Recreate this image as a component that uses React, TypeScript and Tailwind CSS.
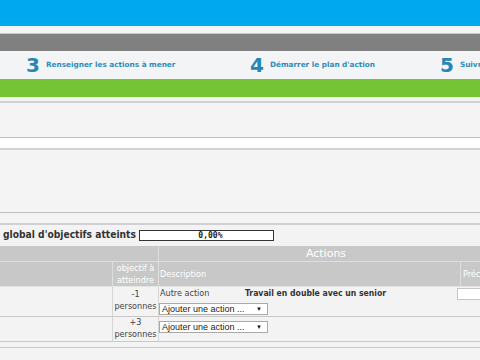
import React from "react";

const cond = "font-['DejaVu_Sans_Condensed','Liberation_Sans',sans-serif]";

function Step({ n, label, w }: { n: string; label: string; w: string }) {
  return (
    <div className={`flex items-center shrink-0 ${w}`}>
      <span className="font-['DejaVu_Sans',sans-serif] font-bold text-[20px] leading-none text-[#2886b6]">{n}</span>
      <span className={`ml-[6px] font-['DejaVu_Sans',sans-serif] font-bold text-[7.3px] leading-none text-[#2e8dbd] whitespace-nowrap`}>{label}</span>
    </div>
  );
}

function FakeSelect() {
  return (
    <div className="w-[109px] h-[12px] bg-white border border-[#a9a9a9] flex items-center justify-between pl-[2px] pr-[5px]">
      <span className="font-['Liberation_Sans',sans-serif] text-[9px] leading-none text-[#222] whitespace-nowrap">Ajouter une action ...</span>
      <span className="text-[6px] leading-none text-[#111]">▼</span>
    </div>
  );
}

export default function App() {
  return (
    <div className="w-[480px] h-[360px] overflow-hidden bg-[#f3f3f3] flex flex-col">
      <div className="h-[26px] shrink-0 bg-[#00a8f0]" />
      <div className="h-[8px] shrink-0 bg-[#f3f4f5] border-b border-[#c9c9c9]" />
      <div className="h-[17px] shrink-0 bg-[#808080]" />
      <div className="h-[28px] shrink-0 bg-[#f3f4f5] flex items-center pl-[26px]">
        <Step n="3" label="Renseigner les actions à mener" w="w-[224px]" />
        <Step n="4" label="Démarrer le plan d'action" w="w-[190px]" />
        <Step n="5" label="Suivre le plan d'action" w="w-[200px]" />
      </div>
      <div className="h-[18px] shrink-0 bg-[#74c436]" />
      <div className="h-[4px] shrink-0 bg-[#f3f4f5]" />
      <div className="h-[2px] shrink-0 bg-[#d2d0d4]" />
      <div className="h-[34px] shrink-0 bg-[#f4f4f4]" />
      <div className="h-[1px] shrink-0 bg-[#bdbdbd]" />
      <div className="h-[10px] shrink-0 bg-white" />
      <div className="h-[2px] shrink-0 bg-[#d3d3d3]" />
      <div className="h-[62px] shrink-0 bg-[#f4f4f4]" />
      <div className="h-[1px] shrink-0 bg-[#bdbdbd]" />
      <div className="h-[10px] shrink-0 bg-[#f4f4f4]" />
      <div className="h-[2px] shrink-0 bg-[#d0cfd4]" />

      {/* title row */}
      <div className="h-[21px] shrink-0 flex items-center pl-[3px]">
        <span className={`${cond} font-bold text-[10.2px] leading-none text-[#333] whitespace-nowrap`}>global d'objectifs atteints</span>
        <div className="ml-[3px] w-[135px] h-[11px] bg-white border border-[#333] flex items-center justify-center pl-[8px]">
          <span className="font-['DejaVu_Sans_Mono',monospace] font-bold text-[8px] leading-none text-[#222]">0,00%</span>
        </div>
      </div>

      {/* table */}
      <div className="w-[560px] shrink-0 flex flex-col">
        {/* header row 1 */}
        <div className="h-[16px] flex bg-[#c8c8c8] border-b border-[#dedede]">
          <div className="w-[159px] border-r border-[#dedede]" />
          <div className="w-[334px] flex items-center justify-center">
            <span className="font-['DejaVu_Sans',sans-serif] text-[11px] leading-none text-white">Actions</span>
          </div>
        </div>
        {/* header row 2 */}
        <div className="h-[25px] flex bg-[#c8c8c8] border-b border-[#e4e4e4]">
          <div className="w-[113px] border-r border-[#dedede]" />
          <div className="w-[46px] border-r border-[#dedede] flex flex-col items-center justify-center">
            <span className={`${cond} text-[9px] leading-[12px] text-white whitespace-nowrap`}>objectif à</span>
            <span className={`${cond} text-[9px] leading-[12px] text-white whitespace-nowrap`}>atteindre</span>
          </div>
          <div className="w-[302px] border-r border-[#dedede] flex items-center pl-[1px]">
            <span className={`${cond} text-[9px] leading-none text-white`}>Description</span>
          </div>
          <div className="flex-1 flex items-center pl-[2px]">
            <span className={`${cond} text-[9px] leading-none text-white`}>Précisions</span>
          </div>
        </div>
        {/* data row 1 */}
        <div className="h-[30px] flex border-b border-[#c8c8c8]">
          <div className="w-[113px] border-r border-[#d6d6d6]" />
          <div className="w-[46px] border-r border-[#d6d6d6] flex flex-col items-center pt-[1px]">
            <span className={`${cond} text-[9px] leading-[12px] text-[#444]`}>-1</span>
            <span className={`${cond} text-[9px] leading-[12px] text-[#444]`}>personnes</span>
          </div>
          <div className="w-[298px] flex flex-col pt-[1px]">
            <div className="h-[11px] flex items-center pl-[1px]">
              <span className={`${cond} w-[85px] text-[9px] leading-none text-[#444]`}>Autre action</span>
              <span className={`${cond} font-bold text-[8.6px] leading-none text-[#333] whitespace-nowrap`}>Travail en double avec un senior</span>
            </div>
            <div className="mt-[4px]">
              <FakeSelect />
            </div>
          </div>
          <div className="flex-1 pt-[1px]">
            <div className="w-[60px] h-[12px] bg-white border border-[#c6c6c6]" />
          </div>
        </div>
        {/* data row 2 */}
        <div className="h-[25px] flex border-b border-[#c8c8c8]">
          <div className="w-[113px] border-r border-[#d6d6d6]" />
          <div className="w-[46px] border-r border-[#d6d6d6] flex flex-col items-center -mt-[1px]">
            <span className={`${cond} text-[9px] leading-[12px] text-[#444]`}>+3</span>
            <span className={`${cond} text-[9px] leading-[12px] text-[#444]`}>personnes</span>
          </div>
          <div className="w-[298px] flex flex-col pt-[4px]">
            <FakeSelect />
          </div>
          <div className="flex-1" />
        </div>
        <div className="h-[5px] bg-[#f3f3f3]" />
        <div className="h-[1px] bg-[#c8c8c8]" />
      </div>
    </div>
  );
}
